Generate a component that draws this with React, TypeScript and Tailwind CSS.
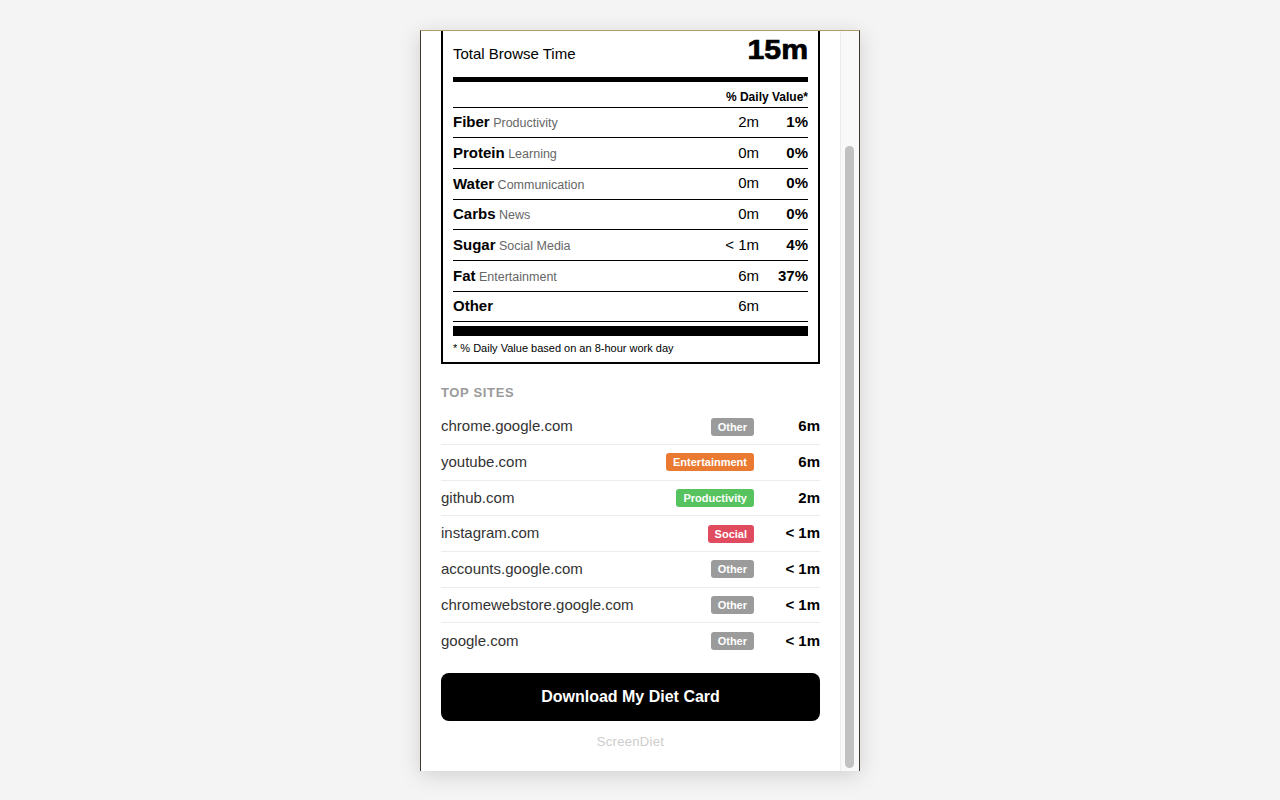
interface NutrientRow {
  name: string;
  category: string;
  time: string;
  percent: string;
}

interface SiteRow {
  domain: string;
  label: string;
  badgeClass: string;
  time: string;
}

const NUTRIENTS: NutrientRow[] = [
  { name: "Fiber", category: "Productivity", time: "2m", percent: "1%" },
  { name: "Protein", category: "Learning", time: "0m", percent: "0%" },
  { name: "Water", category: "Communication", time: "0m", percent: "0%" },
  { name: "Carbs", category: "News", time: "0m", percent: "0%" },
  { name: "Sugar", category: "Social Media", time: "< 1m", percent: "4%" },
  { name: "Fat", category: "Entertainment", time: "6m", percent: "37%" },
  { name: "Other", category: "", time: "6m", percent: "" },
];

const SITES: SiteRow[] = [
  { domain: "chrome.google.com", label: "Other", badgeClass: "bg-[#9b9b9b]", time: "6m" },
  { domain: "youtube.com", label: "Entertainment", badgeClass: "bg-[#ea7a32]", time: "6m" },
  { domain: "github.com", label: "Productivity", badgeClass: "bg-[#56c35e]", time: "2m" },
  { domain: "instagram.com", label: "Social", badgeClass: "bg-[#e14b5f]", time: "< 1m" },
  { domain: "accounts.google.com", label: "Other", badgeClass: "bg-[#9b9b9b]", time: "< 1m" },
  { domain: "chromewebstore.google.com", label: "Other", badgeClass: "bg-[#9b9b9b]", time: "< 1m" },
  { domain: "google.com", label: "Other", badgeClass: "bg-[#9b9b9b]", time: "< 1m" },
];

// the popup is scrolled to the bottom, so the label's top edge is out of view
function FactsLabel() {
  return (
    <div className="border-x-2 border-b-2 border-black px-[10px] pb-[7px] pt-[6px]">
      <div className="flex items-baseline justify-between pb-[11px]">
        <span className="text-[15px]">Total Browse Time</span>
        <span className="inline-block origin-right scale-x-[1.12] text-[27px] font-bold leading-[27px] [-webkit-text-stroke:0.7px_black]">
          15m
        </span>
      </div>
      <div className="h-[5px] bg-black" />

      <div className="flex h-[26px] items-end justify-end border-b border-black pb-[3px] text-[12px] font-bold leading-[14px]">
        % Daily Value*
      </div>

      {NUTRIENTS.map((row) => (
        <div key={row.name} className="flex h-[30.7px] items-center border-b border-black">
          <div className="flex-1 truncate">
            <span className="text-[15px] font-bold">{row.name}</span>
            {row.category && <span className="text-[12.5px] text-[#666]"> {row.category}</span>}
          </div>
          <span className="text-[15px]">{row.time}</span>
          <span className="w-[49px] text-right text-[15px] font-bold">{row.percent}</span>
        </div>
      ))}

      <div className="mt-[4px] h-[10px] bg-black" />
      <p className="mt-[6px] text-[11px] leading-[13px]">* % Daily Value based on an 8-hour work day</p>
    </div>
  );
}

export default function App() {
  return (
    <div className="min-h-[800px] bg-[#f4f4f4] pt-[30px] font-['Liberation_Sans',Arial,sans-serif] text-black">
      <div className="mx-auto flex h-[741px] w-[440px] overflow-hidden border-x border-t border-x-[#3f382c] border-t-[#b39b6c] bg-white shadow-[0_4px_20px_rgba(0,0,0,0.15)]">
        <div className="w-[419px] shrink-0 px-5 pb-[21px]">
          <FactsLabel />

          <h2 className="mb-[8px] mt-[21px] text-[13px] font-bold leading-[16px] tracking-[0.05em] text-[#9a9a9a]">
            TOP SITES
          </h2>

          <div>
            {SITES.map((site, index) => (
              <div
                key={site.domain}
                className={`flex h-[35.7px] items-center ${index < SITES.length - 1 ? "border-b border-[#ececec]" : ""}`}
              >
                <span className="flex-1 truncate text-[15px] text-[#333]">{site.domain}</span>
                <span
                  className={`rounded-[3px] px-[7px] text-[11px] font-bold leading-[18px] text-white ${site.badgeClass}`}
                >
                  {site.label}
                </span>
                <span className="w-[66px] text-right text-[15px] font-bold">{site.time}</span>
              </div>
            ))}
          </div>

          <button className="mt-[14px] flex h-[48px] w-full items-center justify-center rounded-[8px] bg-black text-[16px] font-bold text-white">
            Download My Diet Card
          </button>

          <p className="mt-[14px] text-center text-[13px] leading-[14px] tracking-[0.3px] text-[#cccccc]">ScreenDiet</p>
        </div>

        {/* scrollbar */}
        <div className="relative flex-1 border-l border-[#ececec] bg-[#f9f9f9]">
          <div className="absolute bottom-[3px] left-[4px] top-[115px] w-[9px] rounded-full bg-[#c1c1c1]" />
        </div>
      </div>
    </div>
  );
}
